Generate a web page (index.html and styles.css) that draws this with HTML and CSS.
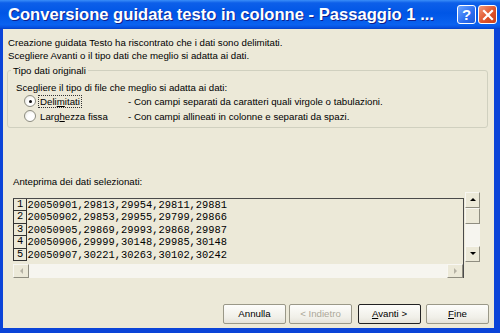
FILE: index.html
```html
<!DOCTYPE html>
<html lang="it">
<head>
  <meta charset="UTF-8">
  <title>Conversione guidata testo in colonne - Passaggio 1 di 3</title>
  <link rel="stylesheet" href="styles.css">
</head>
<body>
  <div class="window">
    <div class="titlebar">
      <span class="title">Conversione guidata testo in colonne - Passaggio 1 ...</span>
      <span class="cap-btn help">?</span>
      <span class="cap-btn close">
        <svg width="12" height="12" viewBox="0 0 12 12"><path d="M2 2 L10 10 M10 2 L2 10" stroke="#fff" stroke-width="2.2" stroke-linecap="square"/></svg>
      </span>
    </div>

    <div class="client">
      <p class="intro">Creazione guidata Testo ha riscontrato che i dati sono delimitati.<br>Scegliere Avanti o il tipo dati che meglio si adatta ai dati.</p>

      <fieldset class="group">
        <legend>Tipo dati originali</legend>
        <p class="prompt">Scegliere il tipo di file che meglio si adatta ai dati:</p>
        <div class="option">
          <span class="radio checked"></span>
          <span class="opt-label"><span class="focus">Deli<u>m</u>itati</span></span>
          <span class="opt-desc">- Con campi separati da caratteri quali virgole o tabulazioni.</span>
        </div>
        <div class="option">
          <span class="radio"></span>
          <span class="opt-label"><span class="nofocus">Larg<u>h</u>ezza fissa</span></span>
          <span class="opt-desc">- Con campi allineati in colonne e separati da spazi.</span>
        </div>
      </fieldset>

      <p class="preview-label">Anteprima dei dati selezionati:</p>
      <div class="preview">
        <div class="grid-area">
          <div class="rows">
            <div class="row"><span class="num">1</span><span class="data">20050901,29813,29954,29811,29881</span></div>
            <div class="row"><span class="num">2</span><span class="data">20050902,29853,29955,29799,29866</span></div>
            <div class="row"><span class="num">3</span><span class="data">20050905,29869,29993,29868,29987</span></div>
            <div class="row"><span class="num">4</span><span class="data">20050906,29999,30148,29985,30148</span></div>
            <div class="row"><span class="num">5</span><span class="data">20050907,30221,30263,30102,30242</span></div>
          </div>
          <div class="hscroll">
            <span class="sb-btn"><span class="arr left dim"></span></span>
            <span class="sb-track"></span>
            <span class="sb-btn"><span class="arr right dim"></span></span>
          </div>
        </div>
        <div class="vscroll">
          <span class="sb-btn"><span class="arr up"></span></span>
          <span class="sb-btn thumb"></span>
          <span class="sb-track"></span>
          <span class="sb-btn"><span class="arr down"></span></span>
        </div>
      </div>

      <div class="buttons">
        <button class="btn">Annulla</button>
        <button class="btn disabled">&lt; Indietro</button>
        <button class="btn default"><u>A</u>vanti &gt;</button>
        <button class="btn"><u>F</u>ine</button>
      </div>
    </div>
  </div>
</body>
</html>
```

FILE: styles.css
```css
body { margin: 0; font-family: "Liberation Sans", Arial, sans-serif; font-size: 9.7px; color: #000; }
.window { width: 500px; height: 333px; display: flex; flex-direction: column; background: #0b44d8; overflow: hidden; }

.titlebar { height: 29px; flex: none; display: flex; align-items: center; padding: 0 3px 0 8px; background: linear-gradient(#3a8ef8 0%, #0d5fe9 10%, #0056e6 45%, #0a62f0 85%, #0652e2 94%, #0440c6 100%); }
.title { flex: 1; color: #fff; font-weight: bold; font-size: 16.6px; white-space: nowrap; overflow: hidden; text-shadow: 1px 1px #10208c; }
.cap-btn { width: 17px; height: 17px; margin-left: 2px; border: 1px solid #fff; border-radius: 3px; display: flex; align-items: center; justify-content: center; color: #fff; font-weight: bold; font-size: 15px; }
.help { background: linear-gradient(135deg, #6ea6ff, #2b6df0 60%, #1f5ad8); }
.close { background: linear-gradient(135deg, #f29a7b, #e0542a 55%, #c8401a); }

.client { flex: 1; background: #ece9d8; margin: 0 6px 5px 3px; padding: 6.5px 6px 0 4px; display: flex; flex-direction: column; }
.intro { margin: 0; line-height: 13px; padding-left: 1px; }

.group { margin: 2px 0 0; padding: 4px 0 3px 8px; border: 1px solid #d0d0bf; border-radius: 3px; }
.group legend { padding: 0 2px; margin-left: -5px; line-height: 13px; }
.prompt { margin: 0; line-height: 13px; }
.option { display: flex; align-items: center; height: 15px; }
.radio { width: 12px; height: 12px; margin-left: 8px; border: 1px solid #8c8c80; border-radius: 50%; box-sizing: border-box; background: radial-gradient(circle at 65% 65%, #fff 40%, #e3e2d8); position: relative; }
.radio.checked::after { content: ""; position: absolute; left: 3.5px; top: 3.5px; width: 3px; height: 3px; border-radius: 50%; background: #111; }
.opt-label { width: 90px; margin-left: 2px; flex: none; }
.focus, .nofocus { padding: 0 1px; border: 1px dotted transparent; }
.focus { border-color: #333; }

.preview-label { margin: 47.5px 0 0 6px; line-height: 13px; }
.preview { display: flex; align-items: flex-start; margin: 3.5px 0 0 6px; }
.grid-area { width: 451px; margin-top: 6px; box-sizing: border-box; border-top: 1px solid #4a4a4a; border-right: 1px solid #4a4a4a; }
.rows { height: 64px; overflow: hidden; font-family: "Liberation Mono", "Courier New", monospace; font-size: 10.4px; }
.row { display: flex; height: 12.5px; line-height: 12.5px; }
.num { width: 14px; flex: none; box-sizing: border-box; border: 1px solid #333; border-top: none; text-align: center; line-height: 11.5px; }
.data { padding-left: 0.5px; }

.hscroll { display: flex; height: 14px; margin-top: 1px; }
.hscroll .sb-btn { width: 16px; }
.hscroll .sb-track { flex: 1; }
.vscroll { display: flex; flex-direction: column; width: 15px; margin-left: 1px; }
.vscroll .sb-btn { height: 16px; }
.vscroll .sb-btn.thumb { height: 16px; }
.vscroll .sb-track { height: 22px; }
.sb-btn { box-sizing: border-box; flex: none; background: #ece9d8; border: 1px solid; border-color: #f8f7f2 #8f8d80 #8f8d80 #f8f7f2; display: flex; align-items: center; justify-content: center; }
.sb-track { background: #f6f5ef; }
.arr { width: 0; height: 0; border: 3.5px solid transparent; }
.arr.up { border-bottom-color: #000; border-top-width: 0; }
.arr.down { border-top-color: #000; border-bottom-width: 0; }
.arr.left { border-right-color: #000; border-left-width: 0; }
.arr.right { border-left-color: #000; border-right-width: 0; }
.arr.dim.left { border-right-color: #b5b2a4; }
.arr.dim.right { border-left-color: #b5b2a4; }

.buttons { display: flex; justify-content: flex-end; margin: 26px -1px 0 0; }
.btn { width: 63px; height: 20px; margin-left: 3px; padding: 0; font: inherit; color: #000; background: linear-gradient(#fdfdfb, #f0efe8 70%, #e4e2d8); border: 1px solid #9a9888; border-radius: 2px; }
.btn.disabled { color: #aca899; }
.btn.default { margin-left: 6px; border-color: #222; }
.btn:last-child { margin-left: 5px; }
```
